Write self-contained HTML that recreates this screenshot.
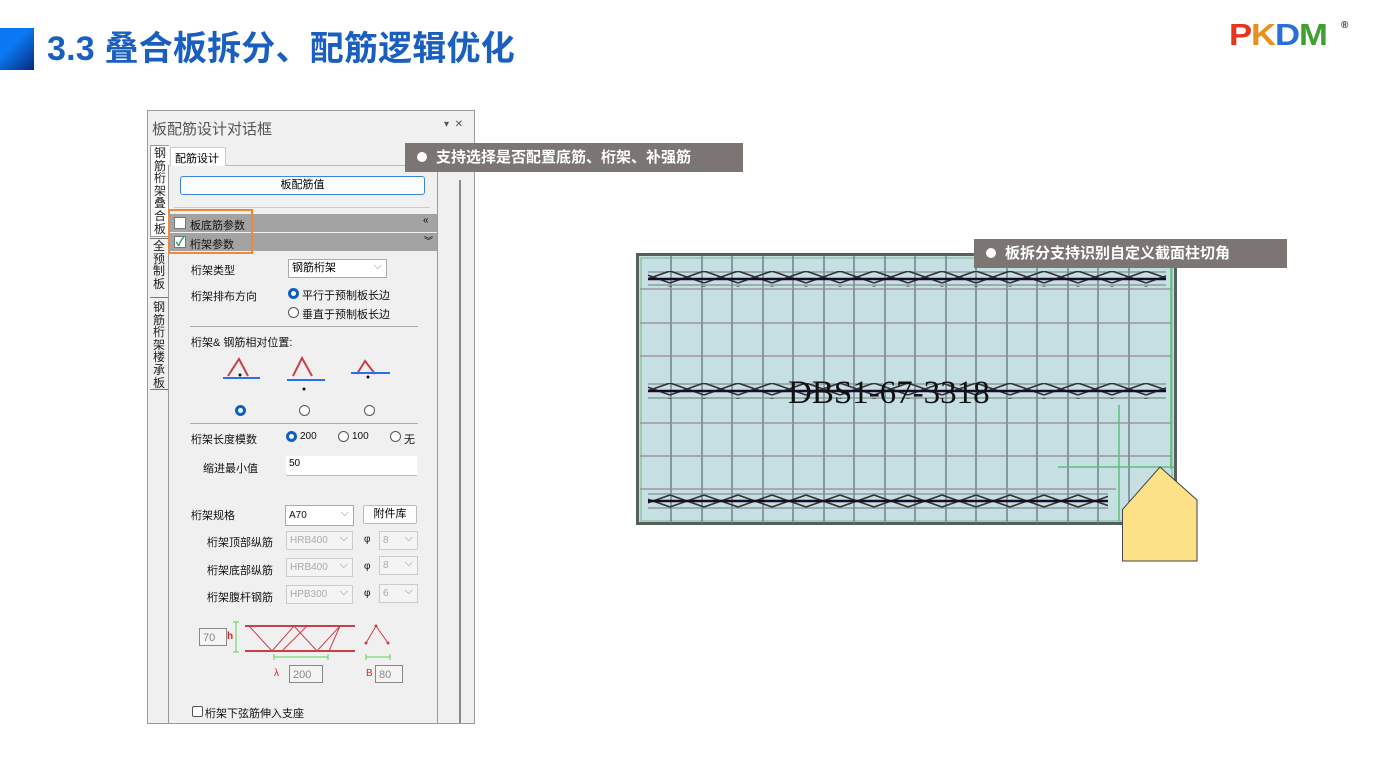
<!DOCTYPE html>
<html><head><meta charset="utf-8"><style>
*{margin:0;padding:0;box-sizing:border-box}
body{width:1379px;height:771px;background:#fff;position:relative;overflow:hidden;font-family:"Liberation Sans","Noto Sans CJK SC",sans-serif}
.a{position:absolute}
.t{font-size:11px;color:#111;white-space:nowrap}
.tip{position:absolute;background:#7b7574;color:#fff;font-weight:bold;font-size:15px;line-height:29px;padding-left:12px;white-space:nowrap}
.tip:before{content:"";display:inline-block;width:10px;height:10px;border-radius:50%;background:#fff;margin-right:9px;vertical-align:0}
.sel{position:absolute;border:1px solid #aaa;background:#fff;font-size:10px;padding-left:3px;line-height:17px;height:19px}
.sel:after{content:"⌵";position:absolute;right:4px;top:-2px;color:#888;font-size:11px}
.dis{background:#f4f4f4;color:#aaa;border-color:#ccc}
.rad{position:absolute;width:11px;height:11px;border:1px solid #555;border-radius:50%;background:#fff}
.rad.on{border:3px solid #0a5fc4}
.vt{position:absolute;width:14px;font-size:12px;line-height:12.6px;color:#222}
</style></head><body>
<div class="a" style="left:0;top:28px;width:34px;height:42px;background:linear-gradient(135deg,#0a78f0 40%,#062a7a)"></div>
<div class="a" style="left:47px;top:26px;font-size:34px;font-weight:bold;color:#1a5fbf;line-height:46px;white-space:nowrap;letter-spacing:0.2px">3.3 叠合板拆分、配筋逻辑优化</div>
<div class="a" style="left:1229px;top:19px;font-size:31px;font-weight:900;line-height:32px;font-family:'Liberation Sans',sans-serif;letter-spacing:-1px;transform:scaleX(1.12);transform-origin:left"><span style="color:#e8351e">P</span><span style="color:#e8901e">K</span><span style="color:#2a6fd6">D</span><span style="color:#3fa032">M</span></div>
<div class="a" style="left:1341px;top:20px;font-size:10px;font-weight:bold;color:#333">®</div>

<div class="a" style="left:147px;top:110px;width:328px;height:614px;border:1px solid #999;background:#f0f0f0"></div>
<div class="a" style="left:152px;top:118px;font-size:15px;color:#555">板配筋设计对话框</div>
<div class="a" style="left:444px;top:119px;font-size:10px;color:#555">▾ &nbsp;✕</div>
<div class="a" style="left:150px;top:145px;width:19px;height:92px;background:#fff;border:1px solid #999;border-right:none"></div>
<div class="vt" style="left:154px;top:147px">钢筋桁架叠合板</div>
<div class="a" style="left:150px;top:238px;width:19px;height:60px;border-top:1px solid #777;border-bottom:1px solid #777"></div>
<div class="vt" style="left:153px;top:240px">全预制板</div>
<div class="vt" style="left:153px;top:301px">钢筋桁架楼承板</div>
<div class="a" style="left:150px;top:389px;width:19px;border-top:1px solid #777"></div>
<div class="a" style="left:168px;top:165px;width:270px;height:558px;border-left:1px solid #999;border-top:1px solid #bbb;background:#f0f0f0"></div>
<div class="a" style="left:170px;top:147px;width:56px;height:19px;background:#fff;border:1px solid #ccc;border-bottom:none;font-size:11px;padding:2px 0 0 4px">配筋设计</div>
<div class="a" style="left:437px;top:165px;width:1px;height:558px;background:#999"></div>
<div class="a" style="left:459px;top:180px;width:2px;height:543px;background:#888"></div>
<div class="a" style="left:180px;top:176px;width:245px;height:19px;border:1px solid #3a86d8;border-radius:3px;background:#fdfdfd;text-align:center;font-size:11px;line-height:17px">板配筋值</div>
<div class="a" style="left:174px;top:207px;width:256px;border-top:1px solid #ccc"></div>
<div class="a" style="left:170px;top:214px;width:267px;height:18px;background:#a3a3a3"></div>
<div class="a" style="left:170px;top:233px;width:267px;height:18px;background:#a3a3a3"></div>
<div class="a" style="left:174px;top:217px;width:12px;height:12px;background:#fff;border:1px solid #777"></div>
<div class="a" style="left:174px;top:236px;width:12px;height:12px;background:#fff;border:1px solid #777;color:#2a9a6a;font-size:12px;line-height:10px;font-weight:bold;text-align:center">✓</div>
<div class="a t" style="left:190px;top:217px">板底筋参数</div>
<div class="a t" style="left:190px;top:236px">桁架参数</div>
<div class="a" style="left:423px;top:215px;font-size:10px">«</div>
<div class="a" style="left:424px;top:234px;font-size:9px">︾</div>
<div class="a" style="left:168px;top:209px;width:85px;height:45px;border:2px solid #f0883a"></div>

<div class="a t" style="left:191px;top:262px">桁架类型</div>
<div class="sel" style="left:288px;top:259px;width:99px;font-size:11px">钢筋桁架</div>
<div class="a t" style="left:191px;top:288px">桁架排布方向</div>
<div class="rad on" style="left:288px;top:288px"></div><div class="a t" style="left:302px;top:287px">平行于预制板长边</div>
<div class="rad" style="left:288px;top:307px"></div><div class="a t" style="left:302px;top:306px">垂直于预制板长边</div>
<div class="a" style="left:190px;top:326px;width:228px;border-top:1px solid #aaa"></div>
<div class="a t" style="left:191px;top:334px">桁架&amp; 钢筋相对位置:</div>
<svg class="a" style="left:215px;top:355px" width="200" height="40">
<g stroke="#c8404a" stroke-width="2" fill="none"><path d="M13 21 L24 4 L33 21"/><path d="M78 21 L87 3 L97 21"/><path d="M142 19 L150 6 L160 19"/></g>
<g stroke="#2a6ff0" stroke-width="2"><path d="M8 23H45"/><path d="M72 25H110"/><path d="M136 18H175"/></g>
<g fill="#111"><circle cx="25" cy="20" r="1.5"/><circle cx="89" cy="34" r="1.5"/><circle cx="153" cy="22" r="1.5"/></g>
</svg>
<div class="rad on" style="left:235px;top:405px"></div>
<div class="rad" style="left:299px;top:405px"></div>
<div class="rad" style="left:364px;top:405px"></div>
<div class="a" style="left:190px;top:423px;width:228px;border-top:1px solid #aaa"></div>
<div class="a t" style="left:191px;top:431px">桁架长度模数</div>
<div class="rad on" style="left:286px;top:431px"></div><div class="a t" style="left:300px;top:431px;font-size:10px">200</div>
<div class="rad" style="left:338px;top:431px"></div><div class="a t" style="left:352px;top:431px;font-size:10px">100</div>
<div class="rad" style="left:390px;top:431px"></div><div class="a t" style="left:404px;top:431px">无</div>
<div class="a t" style="left:203px;top:460px">缩进最小值</div>
<div class="a" style="left:286px;top:456px;width:131px;height:20px;background:#fff;border-bottom:1px solid #bbb;font-size:10px;padding:2px 0 0 3px">50</div>
<div class="a t" style="left:191px;top:507px">桁架规格</div>
<div class="sel" style="left:285px;top:505px;width:69px;height:21px;line-height:19px;color:#111">A70</div>
<div class="a" style="left:363px;top:505px;width:54px;height:19px;border:1px solid #bbb;border-radius:2px;background:#fdfdfd;text-align:center;font-size:11px;line-height:17px">附件库</div>
<div class="a t" style="left:207px;top:534px">桁架顶部纵筋</div><div class="sel dis" style="left:286px;top:531px;width:67px">HRB400</div><div class="a t" style="left:364px;top:534px;font-size:10px">φ</div><div class="sel dis" style="left:379px;top:531px;width:39px">8</div>
<div class="a t" style="left:207px;top:562px">桁架底部纵筋</div><div class="sel dis" style="left:286px;top:558px;width:67px">HRB400</div><div class="a t" style="left:364px;top:561px;font-size:10px">φ</div><div class="sel dis" style="left:379px;top:556px;width:39px">8</div>
<div class="a t" style="left:207px;top:589px">桁架腹杆钢筋</div><div class="sel dis" style="left:286px;top:585px;width:67px">HPB300</div><div class="a t" style="left:364px;top:588px;font-size:10px">φ</div><div class="sel dis" style="left:379px;top:584px;width:39px">6</div>
<svg class="a" style="left:198px;top:618px" width="210" height="70">
<rect x="1.5" y="10.5" width="27" height="17" fill="#f4f4f4" stroke="#888"/>
<text x="5" y="23" font-size="11" fill="#888" font-family="Liberation Sans">70</text>
<text x="29" y="21" font-size="10" fill="#e02020" font-weight="bold" font-family="Liberation Sans">h</text>
<g stroke="#5ad05a" stroke-width="1" fill="none"><path d="M38 4V34M35 4H41M35 34H41"/><path d="M76 39H130M76 36V42M130 36V42"/><path d="M168 39H192M168 36V42M192 36V42"/></g>
<g stroke="#c8404a" stroke-width="2"><path d="M47 8H157"/><path d="M47 33H157"/></g>
<g stroke="#c8404a" stroke-width="1" fill="none"><path d="M51 8L74 33L96 8L119 33L142 8L131 33M84 33L109 8"/><path d="M168 25L178 8L190 25"/></g>
<g fill="#c8404a"><circle cx="168" cy="25" r="1.5"/><circle cx="178" cy="8" r="1.5"/><circle cx="190" cy="25" r="1.5"/></g>
<text x="76" y="58" font-size="10" fill="#e02020" font-family="Liberation Sans">λ</text>
<rect x="91.5" y="47.5" width="33" height="17" fill="#f4f4f4" stroke="#888"/><text x="95" y="60" font-size="11" fill="#888" font-family="Liberation Sans">200</text>
<text x="168" y="58" font-size="10" fill="#e02020" font-family="Liberation Sans">B</text>
<rect x="177.5" y="47.5" width="27" height="17" fill="#f4f4f4" stroke="#888"/><text x="181" y="60" font-size="11" fill="#888" font-family="Liberation Sans">80</text>
</svg>
<div class="a" style="left:192px;top:706px;width:11px;height:11px;border:1px solid #555;border-radius:2px;background:#fff"></div>
<div class="a t" style="left:205px;top:705px">桁架下弦筋伸入支座</div>

<div class="tip" style="left:405px;top:143px;width:338px">支持选择是否配置底筋、桁架、补强筋</div>

<svg class="a" style="left:636px;top:253px" width="565" height="312">
<rect x="1.5" y="1.5" width="538" height="269" fill="#c6dfe3" stroke="#55605a" stroke-width="3"/>
<rect x="5" y="5" width="531" height="263" fill="none" stroke="#79b489" stroke-width="1"/>
<g stroke="#6e8290" stroke-width="1.5">
<path d="M35 3V270M66 3V270M96 3V270M127 3V270M157 3V270M188 3V270M218 3V270M249 3V270M279 3V270M310 3V270M340 3V270M371 3V270M401 3V270M432 3V270M462 3V270M493 3V270"/>
</g>
<g stroke="#9a8890" stroke-width="1.3">
<path d="M4 36H536M4 70H536M4 103H536M4 170H536M4 203H536M4 236H480"/>
</g>
<g stroke="#7f9090" stroke-width="1.2" fill="none">
<path d="M12 19H530M12 32H530M12 131H530M12 145H530M12 241H472M12 255H472"/>
</g>
<defs><pattern id="x" width="34" height="16" patternUnits="userSpaceOnUse"><path d="M0 2L34 14M0 14L34 2" stroke="#333" stroke-width="1.6"/></pattern></defs>
<rect x="12" y="18" width="518" height="16" fill="url(#x)"/>
<rect x="12" y="130" width="518" height="16" fill="url(#x)"/>
<rect x="12" y="240" width="460" height="16" fill="url(#x)"/>
<g stroke="#1a0a2a" stroke-width="2.5"><path d="M12 26H530M12 138H530M12 248H472"/></g>
<g stroke="#5ac07a" stroke-width="1.5"><path d="M535 6V216M483 152V268M422 214H538"/></g>
<text x="152" y="150" font-size="33" font-family="Liberation Serif" fill="#111">DBS1-67-3318</text>
<path d="M486.5 256.5 L524 214 L561 247 L561 308 L486.5 308 Z" fill="#fde186" stroke="#444" stroke-width="1"/>
</svg>
<div class="tip" style="left:974px;top:239px;width:313px">板拆分支持识别自定义截面柱切角</div>
</body></html>
